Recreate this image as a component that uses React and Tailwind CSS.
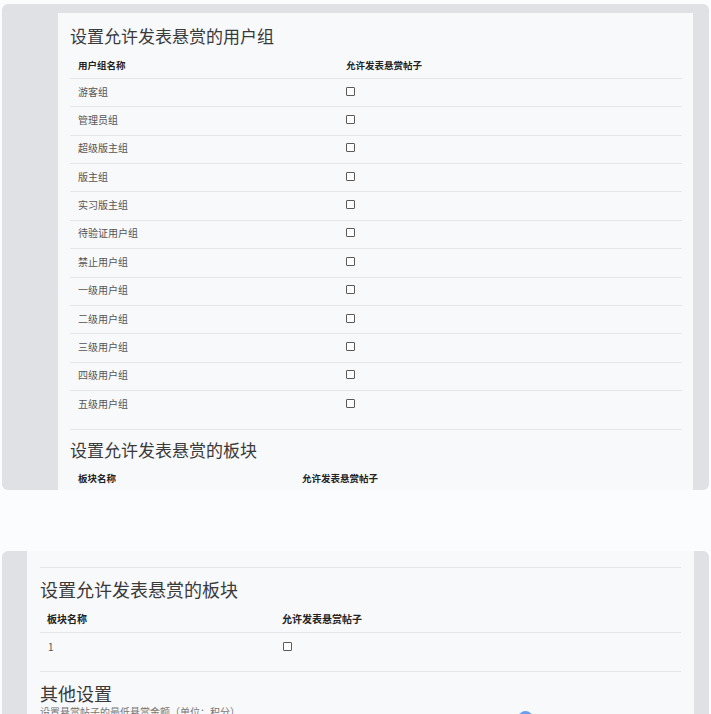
import React from 'react';

const groups = [
  '游客组', '管理员组', '超级版主组', '版主组', '实习版主组', '待验证用户组',
  '禁止用户组', '一级用户组', '二级用户组', '三级用户组', '四级用户组', '五级用户组',
];

const font = { fontFamily: '"Noto Sans CJK SC", "Noto Sans", sans-serif' };

const Checkbox = () => (
  <span className="block w-[9px] h-[9px] border border-[#5a5a5a] bg-white rounded-[1px]" />
);

const App = () => {
  return (
    <div className="min-h-screen bg-[#fbfcfd] pt-[4px] overflow-hidden" style={font}>
      {/* first capture */}
      <div className="mx-[2px] h-[486px] rounded-md bg-[#dfe1e5] pl-[56px] pr-[16px] pt-[9px] overflow-hidden">
        <div className="h-full bg-[#f8f9fa] pl-3 pr-[11px] pt-[11px] overflow-hidden">
          <h2 className="text-[17px] leading-[24px] text-[#3a3a3a]">设置允许发表悬赏的用户组</h2>
          <div className="flex h-[31px] items-center pt-[4px] border-b border-[#e4e6e9] text-[9.5px] font-bold text-[#222]">
            <div className="w-[268px] pl-2">用户组名称</div>
            <div className="pl-2">允许发表悬赏帖子</div>
          </div>
          {groups.map((g, i) => (
            <div
              key={g}
              className={`flex h-[28.36px] items-center pb-[3px] text-[10px] text-[#555] ${i < groups.length - 1 ? 'border-b border-[#e4e6e9]' : ''}`}
            >
              <div className="w-[268px] pl-2">{g}</div>
              <div className="pl-2"><Checkbox /></div>
            </div>
          ))}
          <div className="mt-[10px] border-t border-[#e4e6e9] pt-[8px]">
            <h2 className="text-[17px] leading-[24px] text-[#3a3a3a]">设置允许发表悬赏的板块</h2>
            <div className="flex h-[32px] items-center text-[9.5px] font-bold text-[#222]">
              <div className="w-[224px] pl-2">板块名称</div>
              <div className="pl-2">允许发表悬赏帖子</div>
            </div>
          </div>
        </div>
      </div>

      {/* second capture */}
      <div className="mx-[2px] mt-[61px] rounded-t-md bg-[#dfe1e5] pl-[25px] pr-[15px] h-[200px]">
        <div className="h-full bg-[#f8f9fa] px-[13px] overflow-hidden">
          <div className="h-[17px] border-b border-[#e4e6e9]" />
          <h2 className="pt-[9px] text-[18px] leading-[24px] text-[#3a3a3a]">设置允许发表悬赏的板块</h2>
          <div className="flex h-[32px] items-center pt-[4px] border-b border-[#e4e6e9] text-[10px] font-bold text-[#222]">
            <div className="w-[235px] pl-[7px]">板块名称</div>
            <div className="pl-[7px]">允许发表悬赏帖子</div>
          </div>
          <div className="flex h-[28.4px] items-center pb-[2px] text-[10px] text-[#555]">
            <div className="w-[235px] pl-[8px]">1</div>
            <div className="pl-[8px]"><Checkbox /></div>
          </div>
          <div className="mt-[10px] border-t border-[#e4e6e9] pt-[9px]">
            <h2 className="text-[18px] leading-[24px] text-[#3a3a3a]">其他设置</h2>
            <div className="flex">
              <div className="w-[478px] text-[10px] leading-[14px] text-[#777]">设置悬赏帖子的最低悬赏金额（单位：积分）</div>
              <span className="block mt-[6px] w-[15px] h-[15px] rounded-full bg-[#6b9cf0]" />
            </div>
          </div>
        </div>
      </div>
    </div>
  );
};

export default App;
